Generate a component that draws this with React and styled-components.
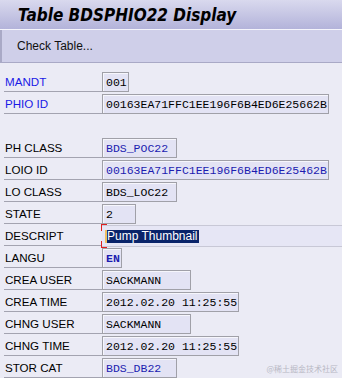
import styled, { createGlobalStyle } from "styled-components";

const GlobalStyle = createGlobalStyle`
    body {
        margin: 0;
        background: #ebebf5;
        font-family: "Liberation Sans", Tahoma, sans-serif;
    }
`

const Screen = styled.div`
    position: relative;
    width: 342px;
    height: 378px;
    overflow: hidden;
    background: #ebebf5;
`

const TitleBar = styled.header`
    height: 29px;
    display: flex;
    align-items: center;
    padding-left: 18px;
    background: linear-gradient(#d9d9ee, #b3b3da);
    border-bottom: 1px solid #f4f4fb;
`

const Title = styled.h1`
    margin: 0;
    font-family: "DejaVu Sans Condensed", "DejaVu Sans", Verdana, sans-serif;
    font-stretch: condensed;
    font-size: 17px;
    font-weight: bold;
    font-style: italic;
    color: #000;
`

const Toolbar = styled.div`
    height: 32px;
    display: flex;
    align-items: center;
    padding-left: 15px;
    background: #cfcfe9;
    border-left: 2px solid #a9a9c6;
    border-bottom: 1px solid #a9a9c6;
`

const ToolButton = styled.span`
    font-family: "Liberation Sans", Tahoma, sans-serif;
    font-size: 12px;
    color: #111;
`

const Form = styled.div`
    padding-top: 8px;
    display: flex;
    flex-direction: column;
`

const Row = styled.div`
    height: 22px;
    display: grid;
    grid-template-columns: 102px 1fr;
    align-items: start;
`

const Label = styled.div`
    margin-left: 4px;
    height: 20px;
    padding-left: 1px;
    display: flex;
    align-items: center;
    border-bottom: 1px solid #a3a3b0;
    font-family: "Liberation Sans", Tahoma, sans-serif;
    font-size: 11.6px;
    color: ${p => (p.$key ? "#1a1ae6" : "#000")};
`

const Field = styled.div`
    box-sizing: border-box;
    width: ${p => Math.round(p.$size * 6.9 + 6)}px;
    height: 20px;
    margin-top: 1px;
    padding-left: 3px;
    display: flex;
    align-items: center;
    background: #e3e3f4;
    border: 1px solid #a0a0a8;
    box-shadow: inset 1px 1px 0 #f6f6fc;
    font-family: "Liberation Mono", "Courier New", monospace;
    font-size: 11.5px;
    font-weight: ${p => (p.$bold ? "bold" : "normal")};
    color: ${p => (p.$blue ? "#1c1cb0" : "#000")};
    white-space: pre;
`

const InputField = styled.div`
    position: relative;
    box-sizing: border-box;
    height: 22px;
    display: flex;
    align-items: center;
    padding-left: 3px;
    background: #e6e6f5;
    border-top: 1px solid #c8c8d6;
    border-bottom: 1px solid #c8c8d6;
`

const Selected = styled.span`
    background: #0a246a;
    color: #fff;
    font-family: "Liberation Sans", Tahoma, sans-serif;
    font-size: 12px;
    line-height: 13px;
    padding: 0 1px 0 0;
    border-left: 2px solid #f0c060;
`

const FocusCorner = styled.span`
    position: absolute;
    left: -1px;
    ${p => (p.$top ? "top: -2px;" : "bottom: -2px;")}
    width: 5px;
    height: 6px;
    border-left: 1px solid #e02020;
    ${p => (p.$top ? "border-top" : "border-bottom")}: 1px solid #e02020;
`

const Spacer = styled.div`
    height: 22px;
`

const Watermark = styled.div`
    position: absolute;
    right: 4px;
    bottom: 4px;
    font-family: "Noto Sans CJK SC", sans-serif;
    font-size: 8px;
    color: #b8b8c4;
`

const rows = [
    { label: "MANDT", value: "001", size: 3, key: true },
    { label: "PHIO ID", value: "00163EA71FFC1EE196F6B4ED6E25662B", size: 32, key: true },
    null,
    { label: "PH CLASS", value: "BDS_POC22", size: 10, blue: true },
    { label: "LOIO ID", value: "00163EA71FFC1EE196F6B4ED6E25462B", size: 32, blue: true },
    { label: "LO CLASS", value: "BDS_LOC22", size: 10 },
    { label: "STATE", value: "2", size: 4 },
    { label: "DESCRIPT", input: "Pump Thumbnail" },
    { label: "LANGU", value: "EN", size: 2, blue: true, bold: true },
    { label: "CREA USER", value: "SACKMANN", size: 12 },
    { label: "CREA TIME", value: "2012.02.20 11:25:55", size: 19 },
    { label: "CHNG USER", value: "SACKMANN", size: 12 },
    { label: "CHNG TIME", value: "2012.02.20 11:25:55", size: 19 },
    { label: "STOR CAT", value: "BDS_DB22", size: 10, blue: true },
];

export default function App() {
    return (
        <Screen>
            <GlobalStyle />
            <TitleBar>
                <Title>Table BDSPHIO22 Display</Title>
            </TitleBar>
            <Toolbar>
                <ToolButton>Check Table...</ToolButton>
            </Toolbar>
            <Form>
                {rows.map((r, i) =>
                    r === null ? (
                        <Spacer key={i} />
                    ) : (
                        <Row key={i}>
                            <Label $key={r.key}>{r.label}</Label>
                            {r.input ? (
                                <InputField>
                                    <FocusCorner $top />
                                    <FocusCorner />
                                    <Selected>{r.input}</Selected>
                                </InputField>
                            ) : (
                                <Field $size={r.size} $blue={r.blue} $bold={r.bold}>
                                    {r.value}
                                </Field>
                            )}
                        </Row>
                    )
                )}
            </Form>
            <Watermark>@稀土掘金技术社区</Watermark>
        </Screen>
    );
}
